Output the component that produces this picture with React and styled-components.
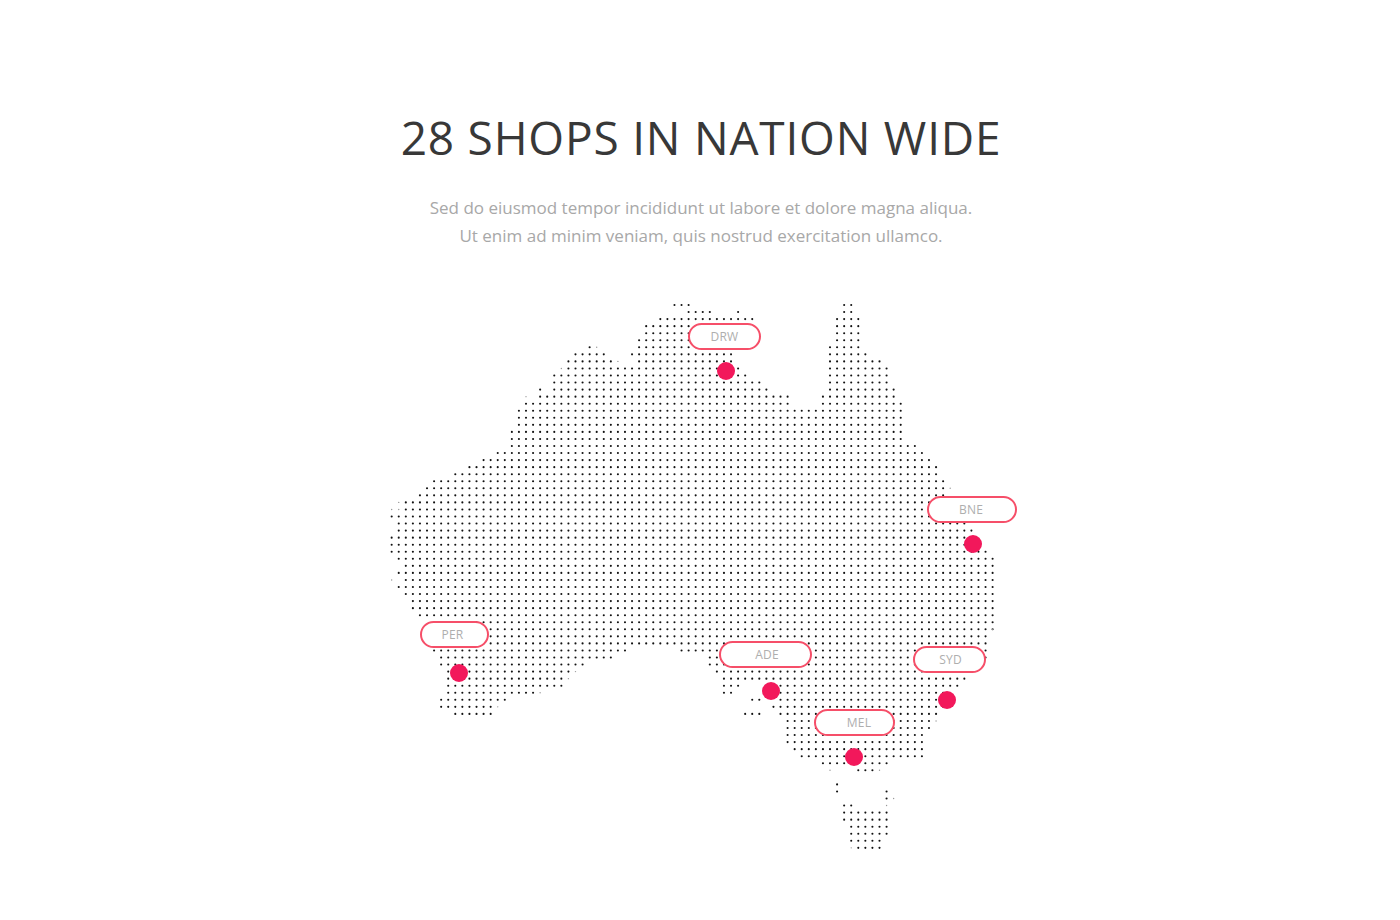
import React from "react";
import styled, { createGlobalStyle } from "styled-components";

const GlobalStyle = createGlobalStyle`
  body {
    margin: 0;
    background: #fff;
    font-family: "Open Sans", "Noto Sans", sans-serif;
  }
`;

// one entry per row of the dot grid, each a list of [firstCol, lastCol]
const ROWS = [
  [[40, 42], [64, 65]],
  [[42, 45], [49, 49], [64, 65]],
  [[38, 51], [63, 66]],
  [[36, 51], [63, 66]],
  [[36, 51], [63, 66]],
  [[35, 51], [63, 66]],
  [[28, 28], [35, 51], [62, 66]],
  [[26, 30], [34, 48], [62, 67]],
  [[25, 31], [35, 48], [62, 69]],
  [[25, 49], [62, 70]],
  [[23, 50], [62, 70]],
  [[23, 52], [62, 70]],
  [[21, 21], [23, 53], [62, 71]],
  [[21, 56], [61, 71]],
  [[19, 56], [61, 72]],
  [[18, 72]],
  [[18, 72]],
  [[18, 72]],
  [[17, 72]],
  [[17, 72]],
  [[17, 74]],
  [[15, 75]],
  [[13, 76]],
  [[11, 77]],
  [[9, 77]],
  [[6, 78]],
  [[5, 78]],
  [[4, 78]],
  [[2, 80]],
  [[2, 80]],
  [[0, 81]],
  [[1, 81]],
  [[1, 82]],
  [[0, 82]],
  [[0, 83]],
  [[0, 84]],
  [[1, 85]],
  [[2, 85]],
  [[1, 85]],
  [[2, 85]],
  [[1, 85]],
  [[2, 85]],
  [[3, 85]],
  [[3, 85]],
  [[4, 85]],
  [[6, 85]],
  [[6, 85]],
  [[6, 84]],
  [[6, 84]],
  [[6, 33], [41, 84]],
  [[7, 31], [45, 84]],
  [[7, 27], [45, 83]],
  [[8, 25], [46, 82]],
  [[8, 24], [47, 81]],
  [[8, 24], [47, 49], [55, 80]],
  [[8, 20], [47, 48], [55, 78]],
  [[7, 16], [51, 52], [55, 78]],
  [[7, 14], [54, 78]],
  [[9, 14], [50, 52], [55, 77]],
  [[56, 76]],
  [[56, 76]],
  [[56, 75]],
  [[56, 75]],
  [[57, 75]],
  [[58, 75]],
  [[61, 70]],
  [[66, 68]],
  [],
  [[63, 63]],
  [[63, 63], [70, 70]],
  [[70, 70]],
  [[64, 65]],
  [[64, 70]],
  [[64, 70]],
  [[65, 70]],
  [[65, 70]],
  [[65, 69]],
  [[66, 69]],
];

// half-printed dots along the coast, [row, col]
const FAINT = [
  [6, 29], [8, 32], [9, 24], [13, 19], [26, 79], [28, 1], [29, 0],
  [29, 1], [39, 0], [46, 85], [52, 26], [53, 25], [55, 21], [57, 15], [59, 77], [66, 62],
  [66, 69], [70, 71], [71, 70], [77, 65],
];

const PINS = [
  { code: "DRW", left: 308, top: 23, width: 73, shift: 0, dotX: 346, dotY: 70.7 },
  { code: "BNE", left: 547, top: 196, width: 90, shift: -1, dotX: 592.7, dotY: 244 },
  { code: "PER", left: 40, top: 321, width: 69, shift: -2, dotX: 79, dotY: 372.7 },
  { code: "ADE", left: 339, top: 341, width: 93, shift: 1.5, dotX: 391, dotY: 390.7 },
  { code: "SYD", left: 533, top: 346, width: 73, shift: 1, dotX: 567, dotY: 399.7 },
  { code: "MEL", left: 434, top: 409, width: 81, shift: 4.5, dotX: 474, dotY: 457 },
];

const colX = (col) => 11.67 + 7.07 * col;
const rowY = (row) => 5 + 7.05 * row;

const Page = styled.main`
  width: 1400px;
  height: 920px;
  padding-top: 105px;
  box-sizing: border-box;
  text-align: center;
  overflow: hidden;
`;

const Title = styled.h1`
  margin: 0;
  font-size: 46px;
  line-height: 64px;
  font-weight: 400;
  letter-spacing: 0.8px;
  color: #383838;
  padding-left: 2px;
`;

const Intro = styled.p`
  margin: 25px 0 0;
  font-size: 17px;
  line-height: 28px;
  color: #a8a8a8;
  padding-left: 2px;
`;

const MapArea = styled.div`
  position: relative;
  width: 640px;
  height: 560px;
  margin: 50px auto 0;
`;

const DotGrid = styled.svg`
  display: block;
`;

const Label = styled.span`
  position: absolute;
  left: ${(p) => p.$left}px;
  top: ${(p) => p.$top}px;
  width: ${(p) => p.$width}px;
  height: 27px;
  box-sizing: border-box;
  border: 2px solid #f64f69;
  border-radius: 14px;
  background: #fff;
  padding-left: ${(p) => Math.max(p.$shift * 2, 0)}px;
  padding-right: ${(p) => Math.max(-p.$shift * 2, 0)}px;
  font-size: 12px;
  line-height: 23px;
  letter-spacing: 0.2px;
  color: #aeaeae;
  text-align: center;
`;

const Marker = styled.span`
  position: absolute;
  left: ${(p) => p.$x - 9}px;
  top: ${(p) => p.$y - 9}px;
  width: 18px;
  height: 18px;
  border-radius: 50%;
  background: #f2185b;
`;

export default function App() {
  return (
    <Page>
      <GlobalStyle />
      <Title>28 SHOPS IN NATION WIDE</Title>
      <Intro>
        Sed do eiusmod tempor incididunt ut labore et dolore magna aliqua.
        <br />
        Ut enim ad minim veniam, quis nostrud exercitation ullamco.
      </Intro>
      <MapArea>
        <DotGrid width="640" height="560" viewBox="0 0 640 560">
          {ROWS.map((spans, row) =>
            spans.map(([from, to]) =>
              Array.from({ length: to - from + 1 }, (_, i) => (
                <circle
                  key={`${row}-${from + i}`}
                  cx={colX(from + i)}
                  cy={rowY(row)}
                  r="1.05"
                  fill="#111"
                />
              ))
            )
          )}
          {FAINT.map(([row, col]) => (
            <circle key={`f${row}-${col}`} cx={colX(col)} cy={rowY(row)} r="0.7" fill="#999" />
          ))}
        </DotGrid>
        {PINS.map((pin) => (
          <React.Fragment key={pin.code}>
            <Label $left={pin.left} $top={pin.top} $width={pin.width} $shift={pin.shift}>
              {pin.code}
            </Label>
            <Marker $x={pin.dotX} $y={pin.dotY} />
          </React.Fragment>
        ))}
      </MapArea>
    </Page>
  );
}
